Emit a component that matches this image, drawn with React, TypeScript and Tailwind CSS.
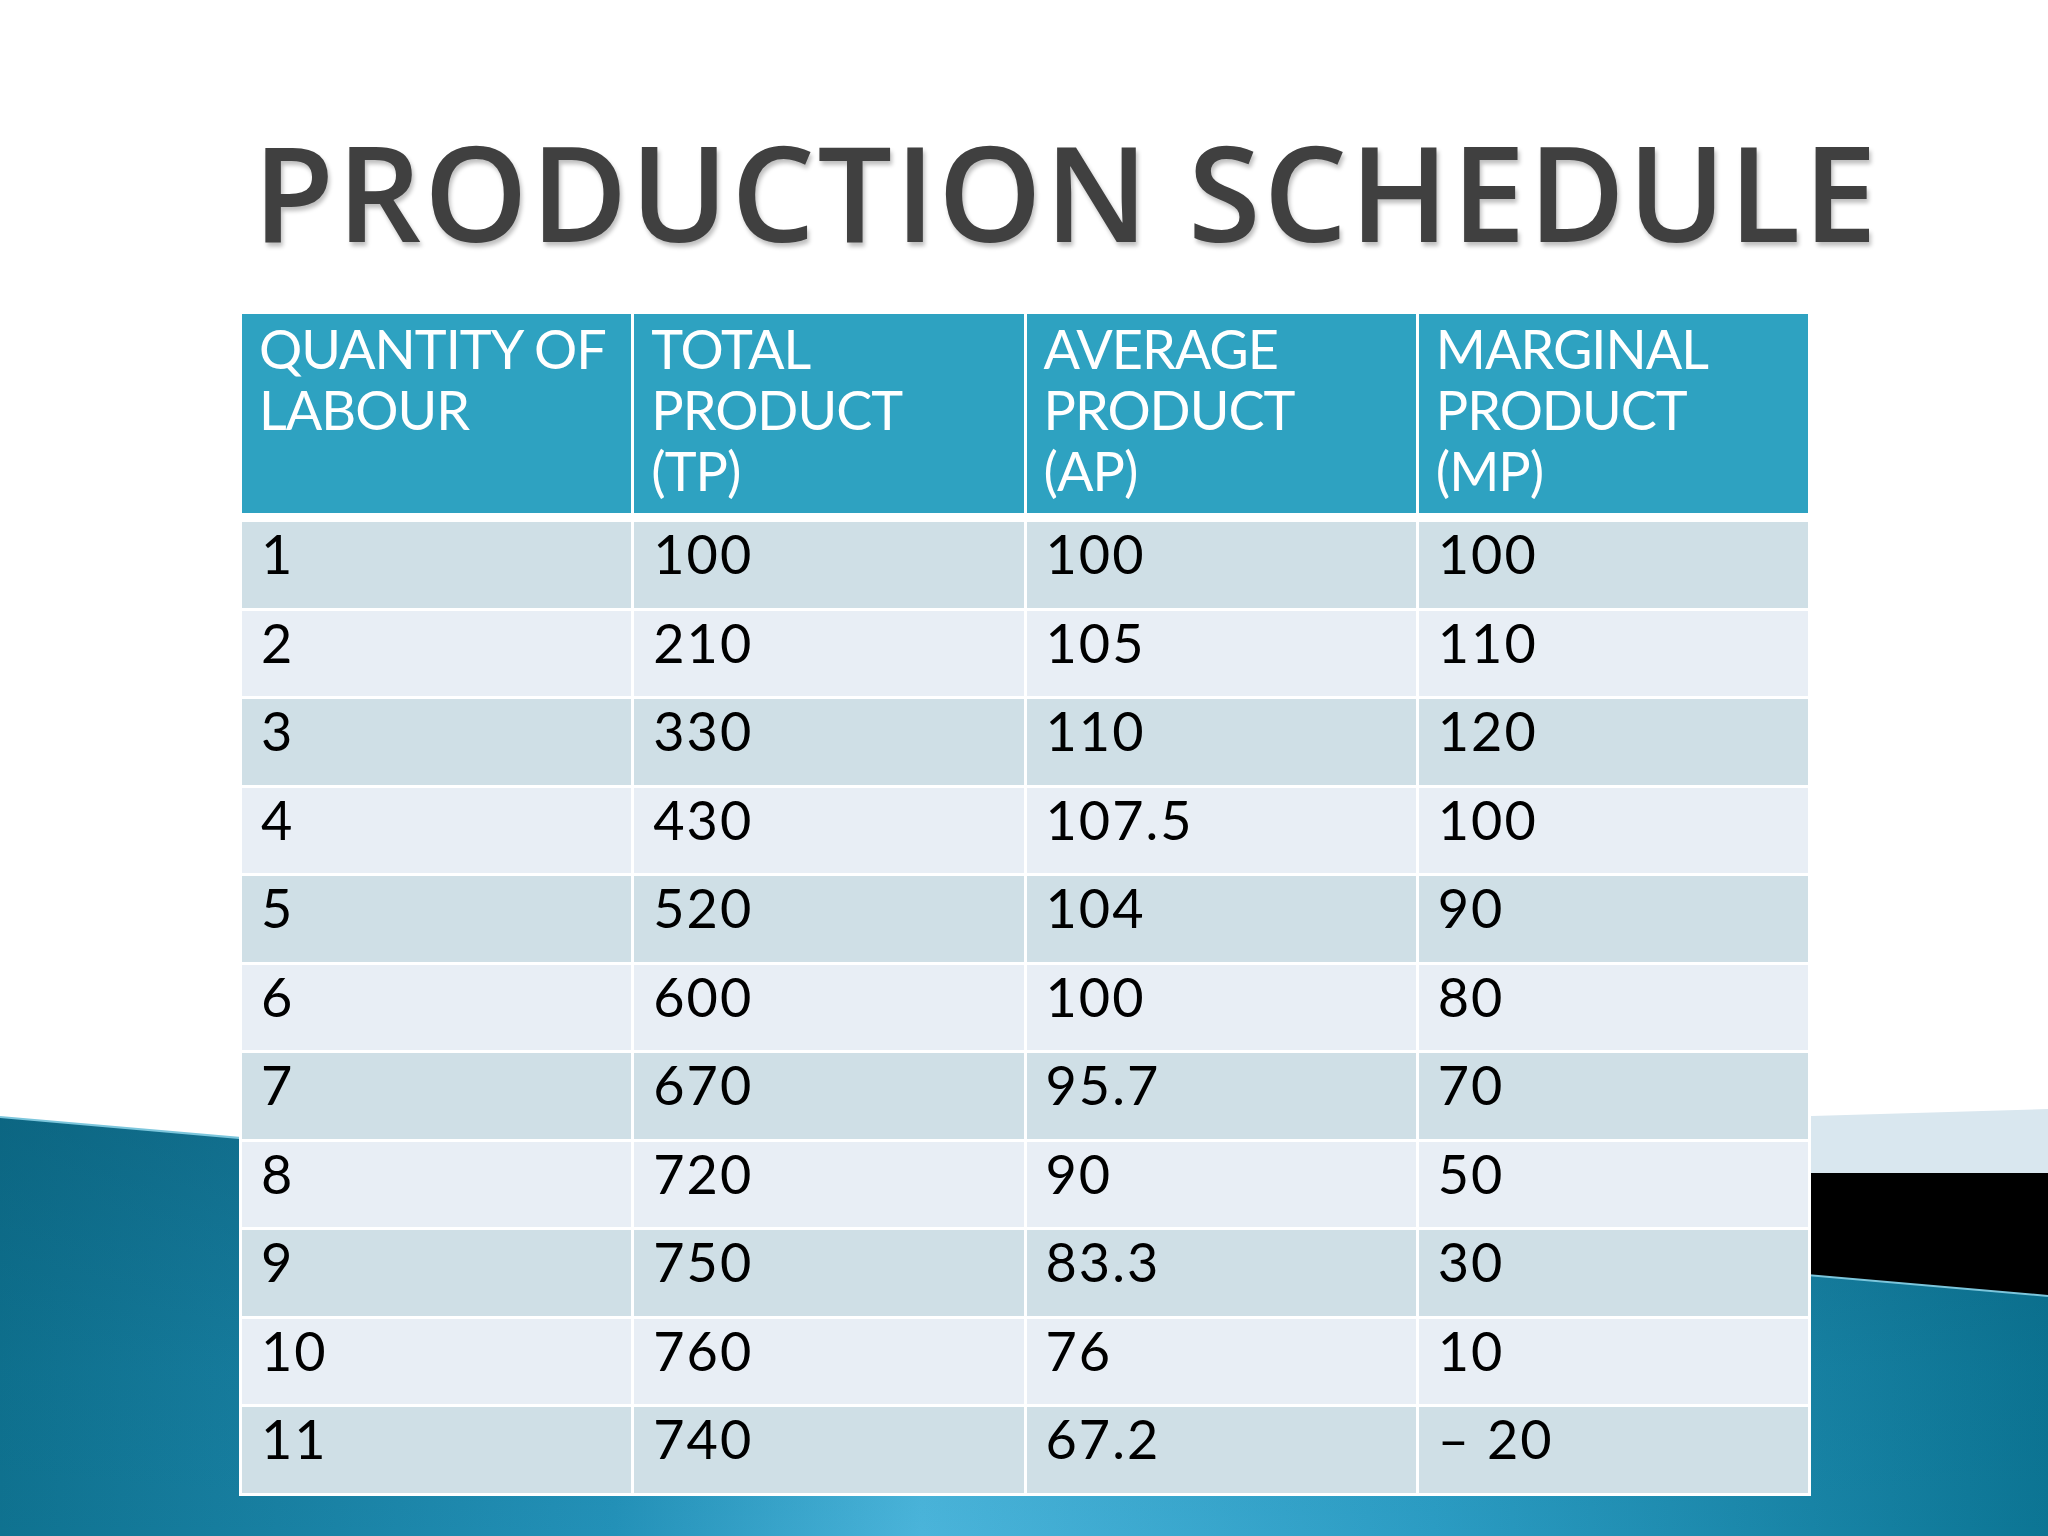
const rows: [string, string, string, string][] = [
  ['1', '100', '100', '100'],
  ['2', '210', '105', '110'],
  ['3', '330', '110', '120'],
  ['4', '430', '107.5', '100'],
  ['5', '520', '104', '90'],
  ['6', '600', '100', '80'],
  ['7', '670', '95.7', '70'],
  ['8', '720', '90', '50'],
  ['9', '750', '83.3', '30'],
  ['10', '760', '76', '10'],
  ['11', '740', '67.2', '– 20'],
]

const headers = [
  ['QUANTITY OF', 'LABOUR'],
  ['TOTAL', 'PRODUCT', '(TP)'],
  ['AVERAGE', 'PRODUCT', '(AP)'],
  ['MARGINAL', 'PRODUCT', '(MP)'],
]

function Backdrop() {
  return (
    <svg className="absolute inset-0" width="2048" height="1536" viewBox="0 0 2048 1536">
      <defs>
        <linearGradient id="sea" x1="0" y1="0" x2="1" y2="0">
          <stop offset="0" stopColor="#0f7290" />
          <stop offset="0.3" stopColor="#2391b8" />
          <stop offset="0.45" stopColor="#4ab4da" />
          <stop offset="0.7" stopColor="#2b9cc3" />
          <stop offset="1" stopColor="#0c7594" />
        </linearGradient>
        <linearGradient id="seaV" x1="0" y1="0" x2="0" y2="1">
          <stop offset="0" stopColor="#064f68" stopOpacity="0.35" />
          <stop offset="0.6" stopColor="#064f68" stopOpacity="0.08" />
          <stop offset="1" stopColor="#064f68" stopOpacity="0" />
        </linearGradient>
      </defs>
      {/* pale band */}
      <polygon points="1000,1140 2048,1109 2048,1174 1000,1174" fill="#d9e7ef" />
      {/* dark band */}
      <polygon points="1000,1173 2048,1173 2048,1297 1000,1205" fill="#000000" />
      {/* sea */}
      <polygon points="0,1117 2048,1296 2048,1536 0,1536" fill="url(#sea)" />
      <polygon points="0,1117 2048,1296 2048,1536 0,1536" fill="url(#seaV)" />
      <line x1="0" y1="1117" x2="2048" y2="1296" stroke="#7cc6dc" strokeWidth="2" />
    </svg>
  )
}

export default function App() {
  return (
    <div className="relative w-[2048px] h-[1536px] bg-white overflow-hidden">
      <Backdrop />
      <div className="relative flex flex-col">
        <h1
          className="pl-[253px] pt-[125px] h-[311px] text-[132px] font-semibold leading-none text-[#404040] tracking-[2.8px] [text-shadow:2px_4px_4px_rgba(0,0,0,0.25)]"
          style={{ fontFamily: '"Open Sans", sans-serif' }}
        >
          PRODUCTION SCHEDULE
        </h1>

        <div
          className="ml-[239px] w-[1572px] bg-white p-[3px] flex flex-col gap-[3px]"
          style={{ fontFamily: 'Lato, sans-serif' }}
        >
          <div className="grid grid-cols-4 gap-x-[3px] mb-[6px]">
            {headers.map((lines, i) => (
              <div
                key={i}
                className="h-[199px] bg-[#2ea2c1] pl-[17px] pt-[4px] text-white text-[54px] leading-[61px] tracking-[-1px]"
              >
                {lines.map((l) => (
                  <div key={l}>{l}</div>
                ))}
              </div>
            ))}
          </div>
          {rows.map((r, i) => (
            <div key={i} className="grid grid-cols-4 gap-x-[3px]">
              {r.map((v, j) => (
                <div
                  key={j}
                  className={
                    'h-[85.5px] pl-[19px] pt-[4px] text-black text-[54px] leading-[56px] tracking-[2px] ' +
                    (i % 2 === 0 ? 'bg-[#cfdfe6]' : 'bg-[#e8eef5]')
                  }
                >
                  {v}
                </div>
              ))}
            </div>
          ))}
        </div>
      </div>
    </div>
  )
}
